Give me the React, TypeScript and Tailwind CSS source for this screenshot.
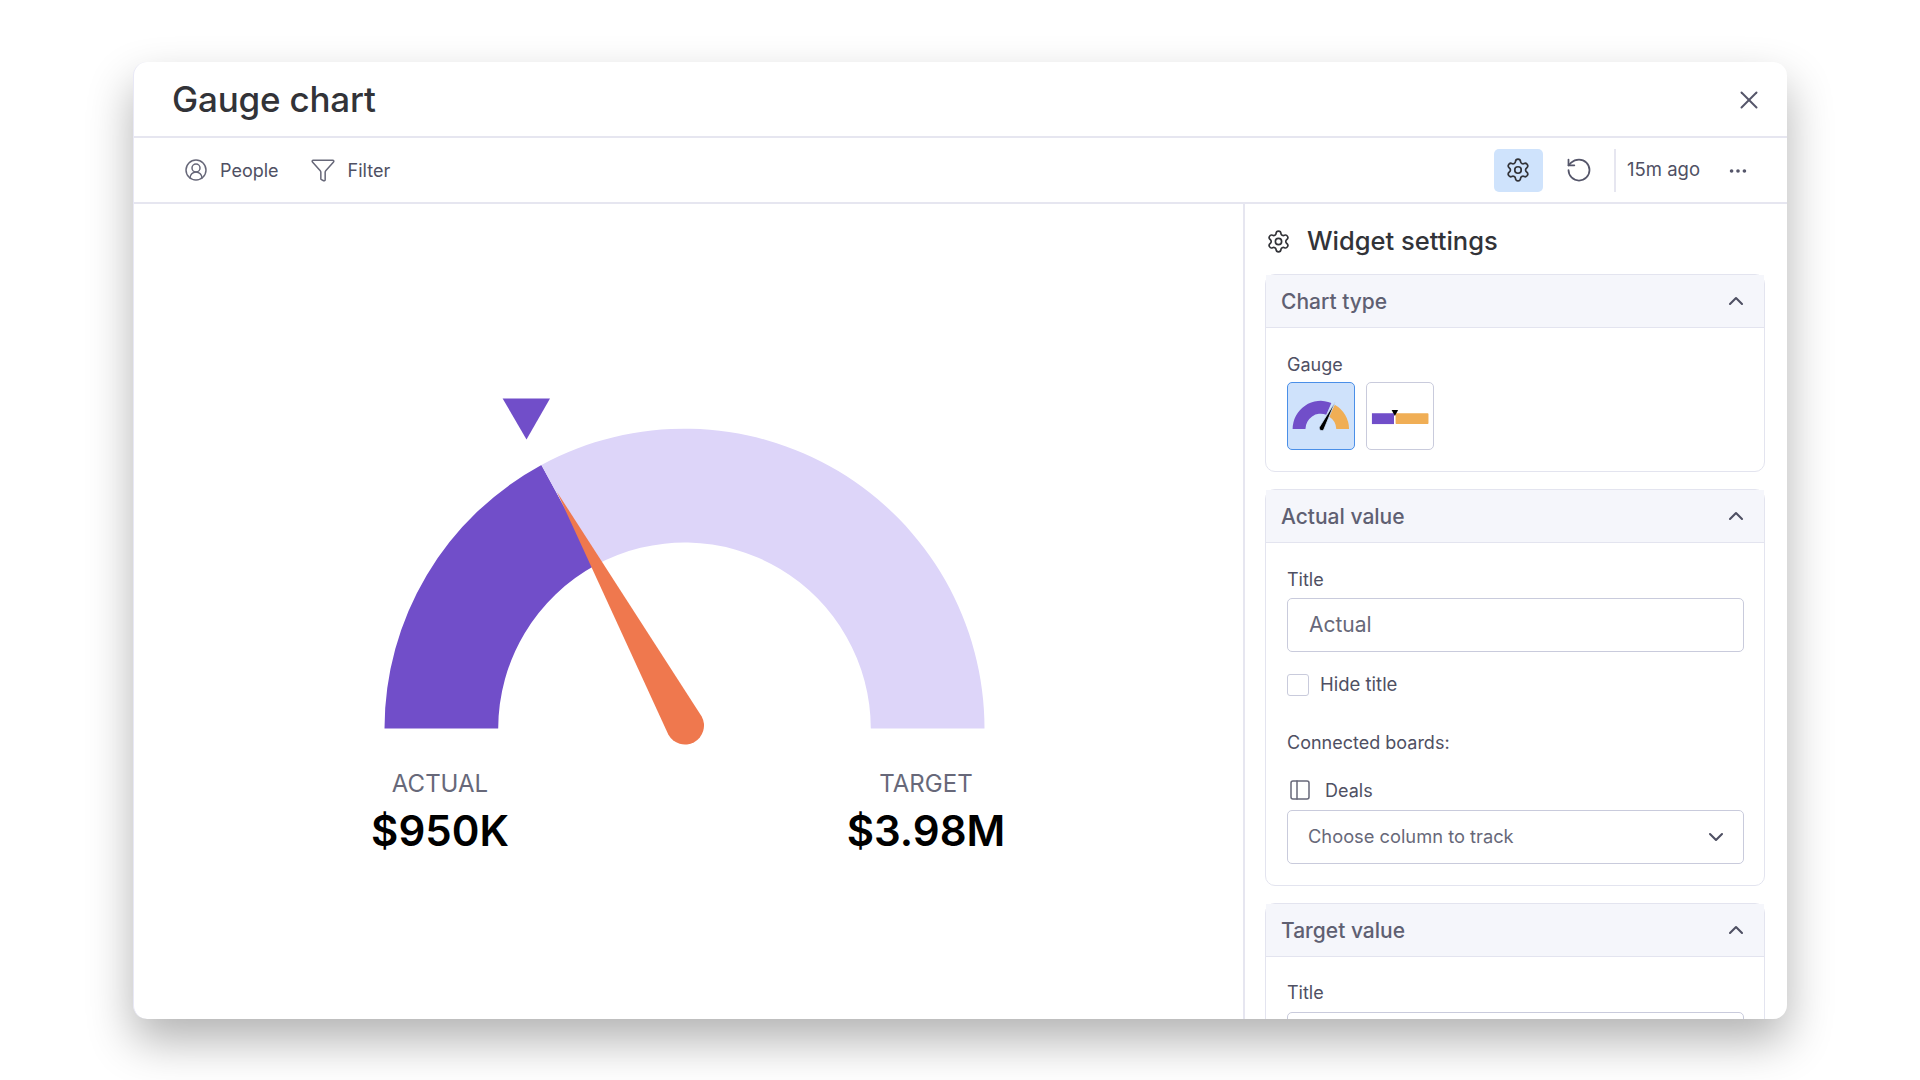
import { CircleUserRound, Funnel, Settings, RotateCcw, X, Ellipsis, ChevronUp, ChevronDown, PanelLeft } from "lucide-react";

function SectionHead({ title }: { title: string }) {
  return (
    <div className="flex h-[53px] items-center justify-between border-b border-[#e3e4ef] bg-[#f5f6fb] pl-[15px] pr-[16px]">
      <span className="pt-px text-[21px] font-medium text-[#5f6072]">{title}</span>
      <ChevronUp className="h-6 w-6 text-[#4f5063]" strokeWidth={2.1} />
    </div>
  );
}

function GaugeThumb() {
  return (
    <svg viewBox="0 0 67 67" className="h-full w-full">
      <path d="M4.7 46.7 A28.6 28.6 0 0 1 44 20.2 L38.8 32.2 A15.6 15.6 0 0 0 17.7 46.7 Z" fill="#714ec9" />
      <path d="M47.5 22 A28.6 28.6 0 0 1 62 46.7 L49 46.7 A15.6 15.6 0 0 0 41.5 34 Z" fill="#f0ae55" />
      <path d="M48 19 L36.2 47.5 A2.6 2.6 0 0 1 31.8 45 Z" fill="#000" stroke="#cfe2fb" strokeWidth="0.8" />
    </svg>
  );
}

function BulletThumb() {
  return (
    <svg viewBox="0 0 67 67" className="h-full w-full">
      <rect x="5" y="30.7" width="22.4" height="11" fill="#714ec9" />
      <rect x="29" y="30.7" width="33.4" height="11" rx="0.8" fill="#f0ae55" />
      <path d="M25 27.5 H31.6 L28.3 33.5 Z" fill="#000" />
    </svg>
  );
}

function Gauge() {
  return (
    <svg viewBox="374 394 622 354" className="h-[354px] w-[622px]">
      <path d="M384.5 728.6 A300 300 0 0 1 541.4 465 L595.8 565 A186.3 186.3 0 0 0 498.2 728.6 Z" fill="#714ec9" />
      <path d="M541.4 465 A300 300 0 0 1 984.5 728.6 L870.8 728.6 A186.3 186.3 0 0 0 595.8 565 Z" fill="#ddd5f9" />
      <path d="M502.6 398.4 H550 L526.5 439.4 Z" fill="#714ec9" />
      <path d="M557 492 L701.7 716.4 A19 19 0 0 1 668.3 734.6 Z" fill="#ef784e" />
    </svg>
  );
}

export default function App() {
  return (
    <div className="h-[1080px] w-[1920px] overflow-hidden bg-white pl-[133px] pt-[62px] font-[Inter,sans-serif] text-[#323338]">
      <div className="flex h-[957px] w-[1654px] flex-col overflow-hidden rounded-[14px] border-l border-[#e8e8f6] bg-white shadow-[0_22px_46px_rgba(0,0,0,0.3)]">
        <div className="flex h-[76px] shrink-0 items-center justify-between border-b-2 border-[#e6e6f0] pl-[38px] pr-[23px]">
          <h1 className="text-[35px] font-medium tracking-[-0.2px] text-[#323338]">Gauge chart</h1>
          <X className="mt-px h-[30px] w-[30px] text-[#55566a]" strokeWidth={1.6} />
        </div>
        <div className="flex h-[66px] shrink-0 items-center border-b-2 border-[#e6e6f0] pl-[50px] pr-[38px]">
          <CircleUserRound className="h-6 w-6 text-[#676879]" strokeWidth={1.5} />
          <span className="ml-3 text-[18px] text-[#4f5063]">People</span>
          <Funnel className="ml-[31px] h-[26px] w-[26px] text-[#676879]" strokeWidth={1.4} />
          <span className="ml-3 text-[18px] text-[#4f5063]">Filter</span>
          <div className="ml-auto flex h-[43px] w-[49px] items-center justify-center rounded-[5px] bg-[#cfe3fc]">
            <Settings className="h-[26px] w-[26px] text-[#323338]" strokeWidth={1.6} />
          </div>
          <RotateCcw className="ml-[22px] h-7 w-7 text-[#55566a]" strokeWidth={1.5} />
          <div className="ml-[21px] h-[43px] w-0.5 bg-[#e6e6f0]" />
          <span className="ml-[11px] text-[18.5px] text-[#4f5063]">15m ago</span>
          <Ellipsis className="ml-[27px] mt-px h-[22px] w-[22px] text-[#55566a]" strokeWidth={2} />
        </div>
        <div className="flex min-h-0 flex-1">
          <div className="flex flex-1 flex-col pl-[240px] pt-[190px]">
            <Gauge />
            <div className="ml-[-34px] mt-[20px] flex w-[686px] justify-between">
              <div className="flex w-[200px] flex-col items-center">
                <span className="text-[24px] leading-[32px] text-[#676879]">ACTUAL</span>
                <span className="mt-[1px] text-[42px] font-semibold leading-[60px] text-black">$950K</span>
              </div>
              <div className="flex w-[200px] flex-col items-center">
                <span className="text-[24px] leading-[32px] text-[#676879]">TARGET</span>
                <span className="mt-[1px] text-[42px] font-semibold leading-[60px] text-black">$3.98M</span>
              </div>
            </div>
          </div>
          <div className="w-[544px] shrink-0 overflow-hidden border-l-2 border-[#e6e6f0] pl-[20px] pr-[22px]">
            <div className="mb-4 mt-5 flex h-[34px] items-center">
              <Settings className="ml-[1px] h-[25px] w-[25px] text-[#323338]" strokeWidth={1.6} />
              <span className="ml-[16px] text-[25.5px] font-medium text-[#323338]">Widget settings</span>
            </div>
            <div className="rounded-[10px] border border-[#e3e4ef]">
              <SectionHead title="Chart type" />
              <div className="pb-[21px] pl-[21px] pr-5 pt-[25px]">
                <div className="h-6 text-[18px] leading-6 text-[#4f5063]">Gauge</div>
                <div className="mt-[5px] flex gap-[11px]">
                  <div className="h-[68px] w-[68px] rounded-[5px] border-[1.5px] border-[#4a8fe8] bg-[#cfe2fb]"><GaugeThumb /></div>
                  <div className="h-[68px] w-[68px] rounded-[5px] border-[1.5px] border-[#c9cbdc] bg-white"><BulletThumb /></div>
                </div>
              </div>
            </div>
            <div className="mt-[17px] rounded-[10px] border border-[#e3e4ef]">
              <SectionHead title="Actual value" />
              <div className="pb-[21px] pl-[21px] pr-5 pt-[25px]">
                <div className="h-6 text-[18px] leading-6 text-[#4f5063]">Title</div>
                <div className="mt-[6px] flex h-[54px] items-center rounded-[5px] border-[1.5px] border-[#c9cbdc] pl-[21px] text-[21px] text-[#676879]">Actual</div>
                <div className="mt-[22px] flex h-[22px] items-center">
                  <div className="h-[22px] w-[22px] rounded-[3px] border-[1.5px] border-[#c9cbdc]" />
                  <span className="ml-[11px] text-[18.5px] text-[#4f5063]">Hide title</span>
                </div>
                <div className="mt-[35px] h-6 text-[18px] leading-6 text-[#4f5063]">Connected boards:</div>
                <div className="mt-[23px] flex h-6 items-center">
                  <PanelLeft className="ml-[1px] h-6 w-6 text-[#676879]" strokeWidth={1.5} />
                  <span className="ml-[13px] text-[18px] text-[#4f5063]">Deals</span>
                </div>
                <div className="mt-2 flex h-[54px] items-center justify-between rounded-[5px] border-[1.5px] border-[#c9cbdc] pl-[20px] pr-[15px] text-[18.3px] text-[#676879]">
                  <span>Choose column to track</span>
                  <ChevronDown className="h-6 w-6 text-[#4f5063]" strokeWidth={2.1} />
                </div>
              </div>
            </div>
            <div className="mt-[17px] rounded-[10px] border border-[#e3e4ef]">
              <SectionHead title="Target value" />
              <div className="pb-[21px] pl-[21px] pr-5 pt-[24px]">
                <div className="h-6 text-[18px] leading-6 text-[#4f5063]">Title</div>
                <div className="mt-[7px] h-[53px] rounded-[5px] border-[1.5px] border-[#c9cbdc]" />
              </div>
            </div>
          </div>
        </div>
      </div>
    </div>
  );
}
